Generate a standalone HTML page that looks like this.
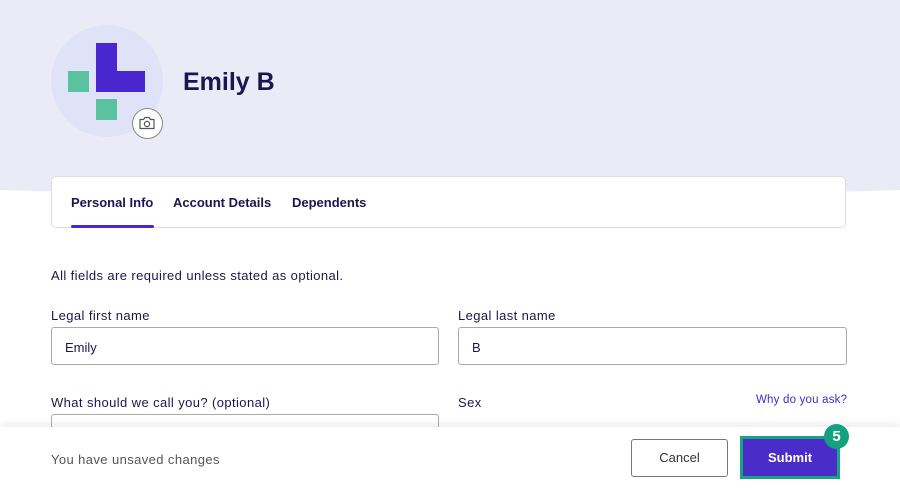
<!DOCTYPE html>
<html><head><style>
*{box-sizing:border-box;margin:0;padding:0}
body{width:900px;height:488px;overflow:hidden;background:#fff;font-family:"Liberation Sans",sans-serif;color:#1e1450;position:relative}
.band{position:absolute;left:-300px;top:-400px;width:1500px;height:596px;background:#ebebf8;border-radius:0 0 50% 50%/0 0 30px 30px}
.avatar{position:absolute;left:51px;top:25px;width:112px;height:112px;border-radius:50%;background:#e0e3f8}
.sq{position:absolute}
.cam{position:absolute;left:132px;top:108px;width:31px;height:31px;border-radius:50%;background:#fff;border:1.5px solid #888}
h1{position:absolute;left:183px;top:68px;font-size:25px;font-weight:bold;color:#1e1450}
.tabs{position:absolute;left:51px;top:176px;width:795px;height:52px;background:#fff;border:1px solid #dcdce4;border-radius:5px}
.tab{position:absolute;top:18px;font-size:13px;font-weight:bold;color:#1e1450}
.ul{position:absolute;left:19px;top:48px;width:83px;height:3px;background:#4a26cf;border-radius:2px}
.t{position:absolute;font-size:13px;letter-spacing:0.4px;color:#1e1450}
.inp{position:absolute;height:38px;border:1px solid #999;border-radius:3px;background:#fff;font-size:13px;padding:12px 0 0 13px}
.foot{position:absolute;left:0;top:427px;width:900px;height:61px;background:#fff;box-shadow:0 -3px 8px rgba(0,0,0,.08)}
</style></head><body>
<div class="band"></div>
<div class="avatar"></div>
<div class="sq" style="left:96px;top:43px;width:21px;height:49px;background:#4a26cf"></div>
<div class="sq" style="left:117px;top:71px;width:28px;height:21px;background:#4a26cf"></div>
<div class="sq" style="left:68px;top:71px;width:21px;height:21px;background:#5bc2a0"></div>
<div class="sq" style="left:96px;top:99px;width:21px;height:21px;background:#5bc2a0"></div>
<div class="cam"><svg width="28" height="28" viewBox="0 0 28 28" style="position:absolute;left:0;top:0"><path d="M7 10.5h3.5l1.5-2h4l1.5 2h3.5v9h-14z" fill="none" stroke="#555" stroke-width="1.2" stroke-linejoin="round"/><circle cx="14" cy="15" r="2.6" fill="none" stroke="#555" stroke-width="1.2"/></svg></div>
<h1>Emily B</h1>
<div class="tabs">
<div class="tab" style="left:19px">Personal Info</div>
<div class="tab" style="left:121px">Account Details</div>
<div class="tab" style="left:240px">Dependents</div>
<div class="ul"></div>
</div>
<div class="t" style="left:51px;top:268px">All fields are required unless stated as optional.</div>
<div class="t" style="left:51px;top:308px">Legal first name</div>
<div class="t" style="left:458px;top:308px">Legal last name</div>
<div class="inp" style="left:51px;top:327px;width:388px;border-color:#aaa">Emily</div>
<div class="inp" style="left:458px;top:327px;width:389px;border-color:#aaa">B</div>
<div class="t" style="left:51px;top:395px">What should we call you? (optional)</div>
<div class="t" style="left:458px;top:395px">Sex</div>
<div class="t" style="left:756px;top:394px;font-size:11.5px;letter-spacing:0.2px;color:#4a26cf">Why do you ask?</div>
<div class="inp" style="left:51px;top:414px;width:388px;border-color:#aaa"></div>
<div class="foot">
<div class="t" style="left:51px;top:25px;color:#555">You have unsaved changes</div>
<div style="position:absolute;left:631px;top:12px;width:97px;height:38px;border:1px solid #777;border-radius:3px;text-align:center;line-height:36px;font-size:13px;color:#333">Cancel</div>
<div style="position:absolute;left:740px;top:9px;width:100px;height:43px;border:3px solid #18a383;background:#4a2dc8;text-align:center;line-height:37px;font-size:13px;font-weight:bold;color:#fff">Submit</div>
<div style="position:absolute;left:824px;top:-3px;width:25px;height:25px;border-radius:50%;background:#14a17f;color:#fff;font-weight:bold;font-size:15px;text-align:center;line-height:25px">5</div>
</div>
</body></html>
